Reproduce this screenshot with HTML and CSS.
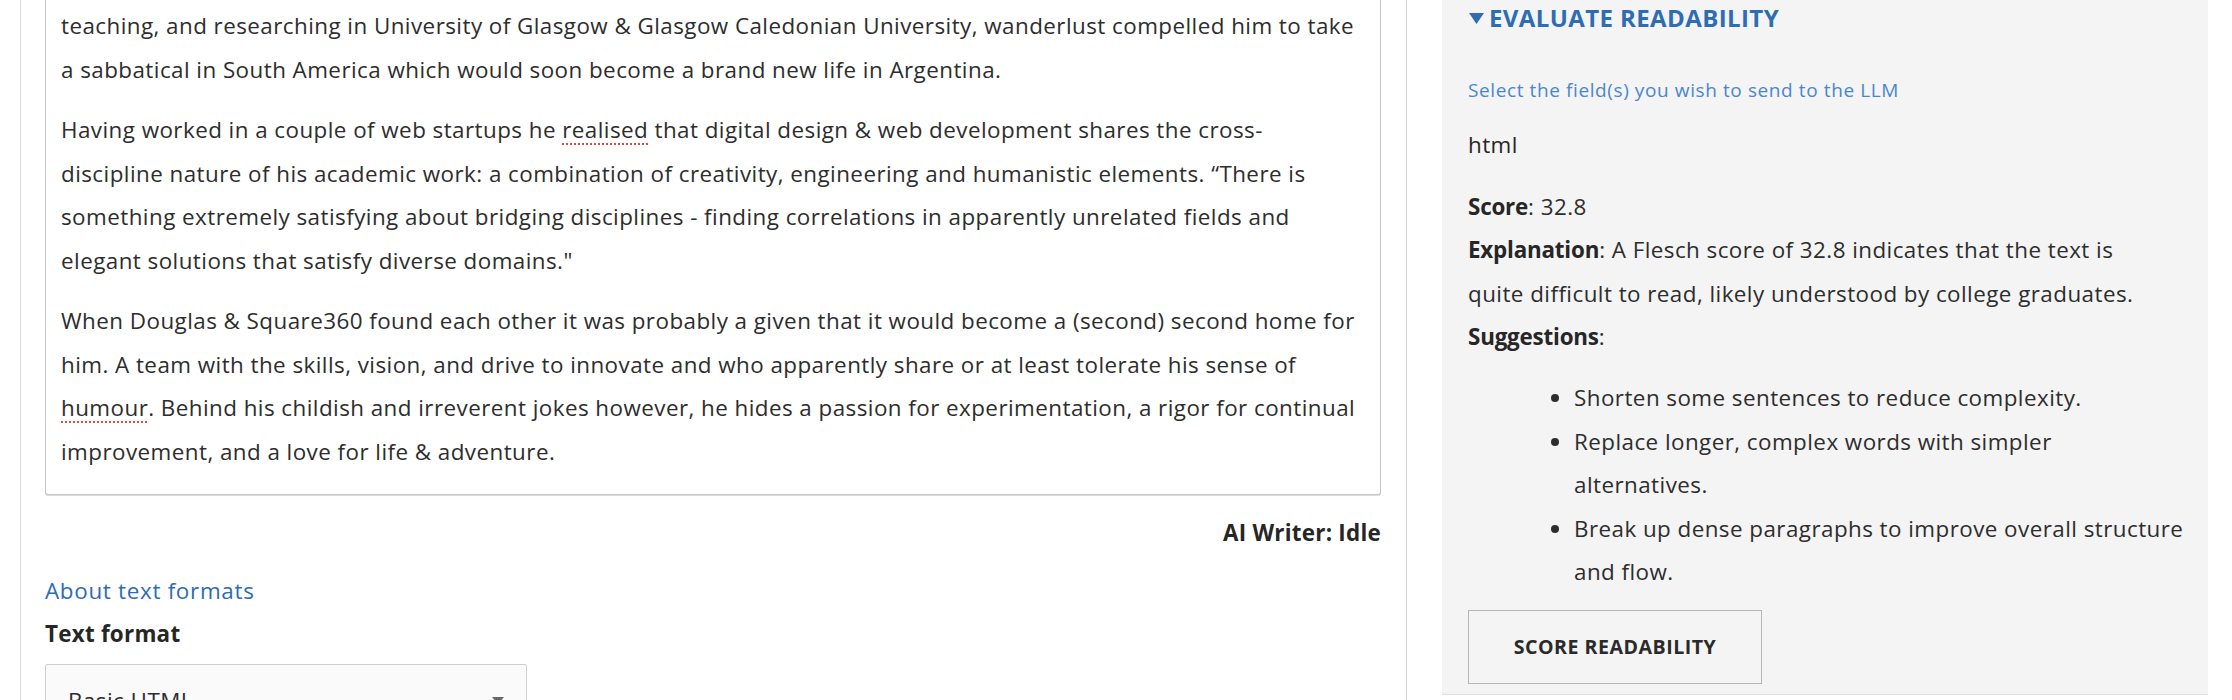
FILE: index.html
```html
<!DOCTYPE html>
<html lang="en">
<head>
<meta charset="utf-8">
<title>Edit content</title>
<link rel="stylesheet" href="styles.css">
</head>
<body>
<div class="layout">
  <main class="main">
    <div class="form-item">
      <div class="editor">
        <p>teaching, and researching in University of Glasgow &amp; Glasgow Caledonian University, wanderlust compelled him to take<br>a sabbatical in South America which would soon become a brand new life in Argentina.</p>
        <p>Having worked in a couple of web startups he <span class="spell">realised</span> that digital design &amp; web development shares the cross-<br>discipline nature of his academic work: a combination of creativity, engineering and humanistic elements. “There is<br>something extremely satisfying about bridging disciplines - finding correlations in apparently unrelated fields and<br>elegant solutions that satisfy diverse domains."</p>
        <p>When Douglas &amp; Square360 found each other it was probably a given that it would become a (second) second home for<br>him. A team with the skills, vision, and drive to innovate and who apparently share or at least tolerate his sense of<br><span class="spell">humour</span>. Behind his childish and irreverent jokes however, he hides a passion for experimentation, a rigor for continual<br>improvement, and a love for life &amp; adventure.</p>
      </div>
      <div class="status">AI Writer: Idle</div>
      <div class="formats">
        <a class="about" href="#">About text formats</a>
        <div class="label">Text format</div>
        <div class="select">
          <span>Basic HTML</span>
          <svg class="caret" width="12" height="8" viewBox="0 0 12 8"><path d="M0 0h12L6 7z" fill="#666"/></svg>
        </div>
      </div>
    </div>
  </main>
  <aside class="side">
    <section class="panel">
      <div class="summary">
        <svg class="tri" width="15" height="11" viewBox="0 0 15 11"><path d="M0 0h15L7.5 11z" fill="#2e6db4"/></svg>
        <span>Evaluate readability</span>
      </div>
      <div class="hint">Select the field(s) you wish to send to the LLM</div>
      <p class="field">html</p>
      <p class="result"><strong>Score</strong>: 32.8<br><strong>Explanation</strong>: A Flesch score of 32.8 indicates that the text is<br>quite difficult to read, likely understood by college graduates.<br><strong>Suggestions</strong>:</p>
      <ul class="tips">
        <li>Shorten some sentences to reduce complexity.</li>
        <li>Replace longer, complex words with simpler<br>alternatives.</li>
        <li>Break up dense paragraphs to improve overall structure<br>and flow.</li>
      </ul>
      <button class="btn" type="button">Score readability</button>
    </section>
  </aside>
</div>
</body>
</html>
```
FILE: styles.css
```css
html, body {
  margin: 0;
  padding: 0;
  background: #fff;
  overflow: hidden;
}
body {
  font-family: "Open Sans", "Noto Sans", sans-serif;
  font-size: 22.4px;
  letter-spacing: 0.45px;
  line-height: 43.5px;
  color: #2d2d2d;
}
.layout {
  display: flex;
  height: 700px;
}
.main {
  flex: 0 0 1407px;
  box-sizing: border-box;
  padding-left: 20px;
  border-right: 1px solid #d3d3d3;
}
.form-item {
  height: 100%;
  box-sizing: border-box;
  border-left: 1px solid #dadada;
  padding: 0 25px 0 24px;
}
.editor {
  border: 1px solid #c6c6c6;
  border-top: 0;
  border-radius: 0 0 3px 3px;
  box-shadow: 0 1px 0 #dcdcdc;
  padding: 4px 15px 21px;
  white-space: nowrap;
  overflow: hidden;
  background: #fff;
}
.editor p {
  margin: 0 0 17px;
}
.editor p:last-child {
  margin-bottom: 0;
}
.spell {
  text-decoration: underline dotted #e5473c;
  text-decoration-thickness: 2px;
  text-underline-offset: 5px;
}
.status {
  margin-top: 16px;
  text-align: right;
  font-weight: 700;
  letter-spacing: 0.25px;
  color: #262626;
}
.formats {
  margin-top: 14px;
}
.about {
  display: block;
  color: #2c6cb4;
  letter-spacing: 0.7px;
  text-decoration: none;
}
.label {
  font-weight: 700;
  letter-spacing: 0.25px;
  color: #262626;
}
.select {
  margin-top: 8px;
  width: 482px;
  height: 70px;
  box-sizing: border-box;
  border: 1px solid #cfcfcf;
  border-radius: 2px;
  background: #fafafa;
  display: flex;
  align-items: flex-start;
  justify-content: space-between;
  padding: 14px 22px 0 22px;
}
.caret {
  margin-top: 18px;
}
.side {
  flex: 1;
  padding-left: 35px;
}
.panel {
  width: 766px;
  box-sizing: border-box;
  background: #f4f4f4;
  border-bottom: 1px solid #e0e0e0;
  padding: 0 26px 10px;
}
.summary {
  display: flex;
  align-items: center;
  gap: 5px;
  height: 36px;
  color: #2e6db4;
  font-weight: 700;
  font-size: 24px;
  letter-spacing: 0.4px;
  text-transform: uppercase;
}
.tri {
  flex: none;
  margin-left: 1px;
}
.hint {
  margin-top: 39px;
  font-size: 19px;
  line-height: 30px;
  letter-spacing: 0.6px;
  color: #4a86cf;
}
.field {
  margin: 18px 0 0;
  color: #262626;
}
.result {
  margin: 18px 0 0;
  white-space: nowrap;
}
.result strong {
  color: #262626;
  letter-spacing: -0.2px;
}
.tips {
  margin: 17.5px 0 0;
  padding-left: 106px;
  white-space: nowrap;
}
.btn {
  display: block;
  margin-top: 16px;
  width: 294px;
  height: 74px;
  border: 1px solid #b7b7b7;
  border-radius: 0;
  background: #f4f4f4;
  font-family: inherit;
  font-size: 19.6px;
  font-weight: 700;
  letter-spacing: 0.5px;
  text-transform: uppercase;
  color: #2a2a2a;
  cursor: pointer;
}
```
